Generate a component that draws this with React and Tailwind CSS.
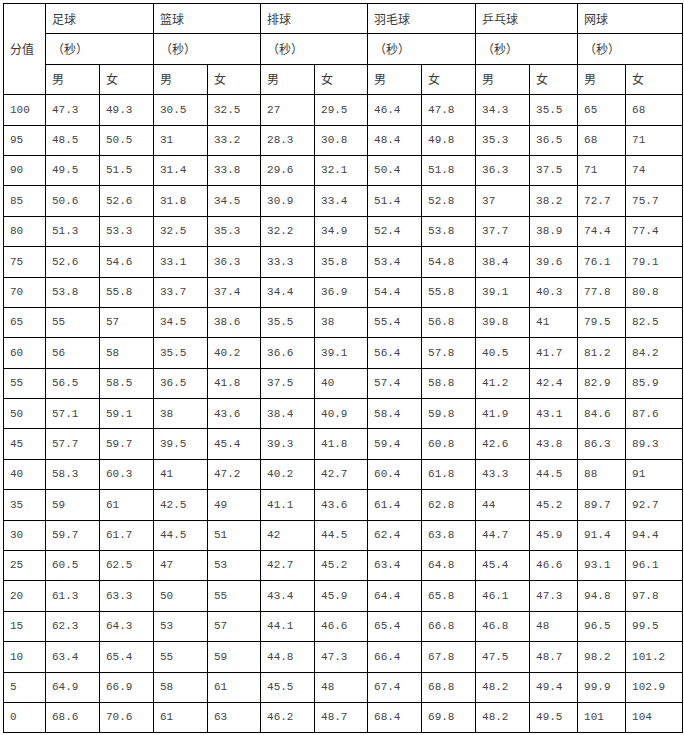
import { Fragment } from 'react';

const sports = ['足球', '篮球', '排球', '羽毛球', '乒乓球', '网球'];

const widths = [42, 54, 54, 54, 53, 54, 53, 54, 54, 54, 48, 48, 57];

const rows = [
  ['100', '47.3', '49.3', '30.5', '32.5', '27', '29.5', '46.4', '47.8', '34.3', '35.5', '65', '68'],
  ['95', '48.5', '50.5', '31', '33.2', '28.3', '30.8', '48.4', '49.8', '35.3', '36.5', '68', '71'],
  ['90', '49.5', '51.5', '31.4', '33.8', '29.6', '32.1', '50.4', '51.8', '36.3', '37.5', '71', '74'],
  ['85', '50.6', '52.6', '31.8', '34.5', '30.9', '33.4', '51.4', '52.8', '37', '38.2', '72.7', '75.7'],
  ['80', '51.3', '53.3', '32.5', '35.3', '32.2', '34.9', '52.4', '53.8', '37.7', '38.9', '74.4', '77.4'],
  ['75', '52.6', '54.6', '33.1', '36.3', '33.3', '35.8', '53.4', '54.8', '38.4', '39.6', '76.1', '79.1'],
  ['70', '53.8', '55.8', '33.7', '37.4', '34.4', '36.9', '54.4', '55.8', '39.1', '40.3', '77.8', '80.8'],
  ['65', '55', '57', '34.5', '38.6', '35.5', '38', '55.4', '56.8', '39.8', '41', '79.5', '82.5'],
  ['60', '56', '58', '35.5', '40.2', '36.6', '39.1', '56.4', '57.8', '40.5', '41.7', '81.2', '84.2'],
  ['55', '56.5', '58.5', '36.5', '41.8', '37.5', '40', '57.4', '58.8', '41.2', '42.4', '82.9', '85.9'],
  ['50', '57.1', '59.1', '38', '43.6', '38.4', '40.9', '58.4', '59.8', '41.9', '43.1', '84.6', '87.6'],
  ['45', '57.7', '59.7', '39.5', '45.4', '39.3', '41.8', '59.4', '60.8', '42.6', '43.8', '86.3', '89.3'],
  ['40', '58.3', '60.3', '41', '47.2', '40.2', '42.7', '60.4', '61.8', '43.3', '44.5', '88', '91'],
  ['35', '59', '61', '42.5', '49', '41.1', '43.6', '61.4', '62.8', '44', '45.2', '89.7', '92.7'],
  ['30', '59.7', '61.7', '44.5', '51', '42', '44.5', '62.4', '63.8', '44.7', '45.9', '91.4', '94.4'],
  ['25', '60.5', '62.5', '47', '53', '42.7', '45.2', '63.4', '64.8', '45.4', '46.6', '93.1', '96.1'],
  ['20', '61.3', '63.3', '50', '55', '43.4', '45.9', '64.4', '65.8', '46.1', '47.3', '94.8', '97.8'],
  ['15', '62.3', '64.3', '53', '57', '44.1', '46.6', '65.4', '66.8', '46.8', '48', '96.5', '99.5'],
  ['10', '63.4', '65.4', '55', '59', '44.8', '47.3', '66.4', '67.8', '47.5', '48.7', '98.2', '101.2'],
  ['5', '64.9', '66.9', '58', '61', '45.5', '48', '67.4', '68.8', '48.2', '49.4', '99.9', '102.9'],
  ['0', '68.6', '70.6', '61', '63', '46.2', '48.7', '68.4', '69.8', '48.2', '49.5', '101', '104'],
];

const cell = 'border border-black pl-[6px] text-left align-middle';
const cjk = "font-['Noto_Sans_CJK_SC',sans-serif] text-[12px] text-[#3a3a3a]";
const num = "font-['Liberation_Mono','Noto_Sans_CJK_SC',monospace] text-[11px] text-[#444]";

function App() {
  return (
    <div className="min-h-[735px] bg-white pl-[3px] pt-[3px]">
      <table className="w-[679px] table-fixed border-collapse">
        <colgroup>
          {widths.map((w, i) => (
            <col key={i} style={{ width: w }} />
          ))}
        </colgroup>
        <tbody>
          <tr className="h-[30.4px]">
            <td rowSpan={3} className={`${cell} ${cjk} pl-[5px]`}>分值</td>
            {sports.map((s) => (
              <td key={s} colSpan={2} className={`${cell} ${cjk}`}>{s}</td>
            ))}
          </tr>
          <tr className="h-[30.4px]">
            {sports.map((s) => (
              <td key={s} colSpan={2} className={`${cell} ${cjk}`}>（秒）</td>
            ))}
          </tr>
          <tr className="h-[30.4px]">
            {sports.map((s) => (
              <Fragment key={s}>
                <td className={`${cell} ${cjk}`}>男</td>
                <td className={`${cell} ${cjk}`}>女</td>
              </Fragment>
            ))}
          </tr>
          {rows.map((r) => (
            <tr key={r[0]} className="h-[30.4px]">
              {r.map((v, i) => (
                <td key={i} className={`${cell} ${num} ${i === 0 ? 'pl-[5px]' : ''}`}>{v}</td>
              ))}
            </tr>
          ))}
        </tbody>
      </table>
    </div>
  );
}

export default App;
